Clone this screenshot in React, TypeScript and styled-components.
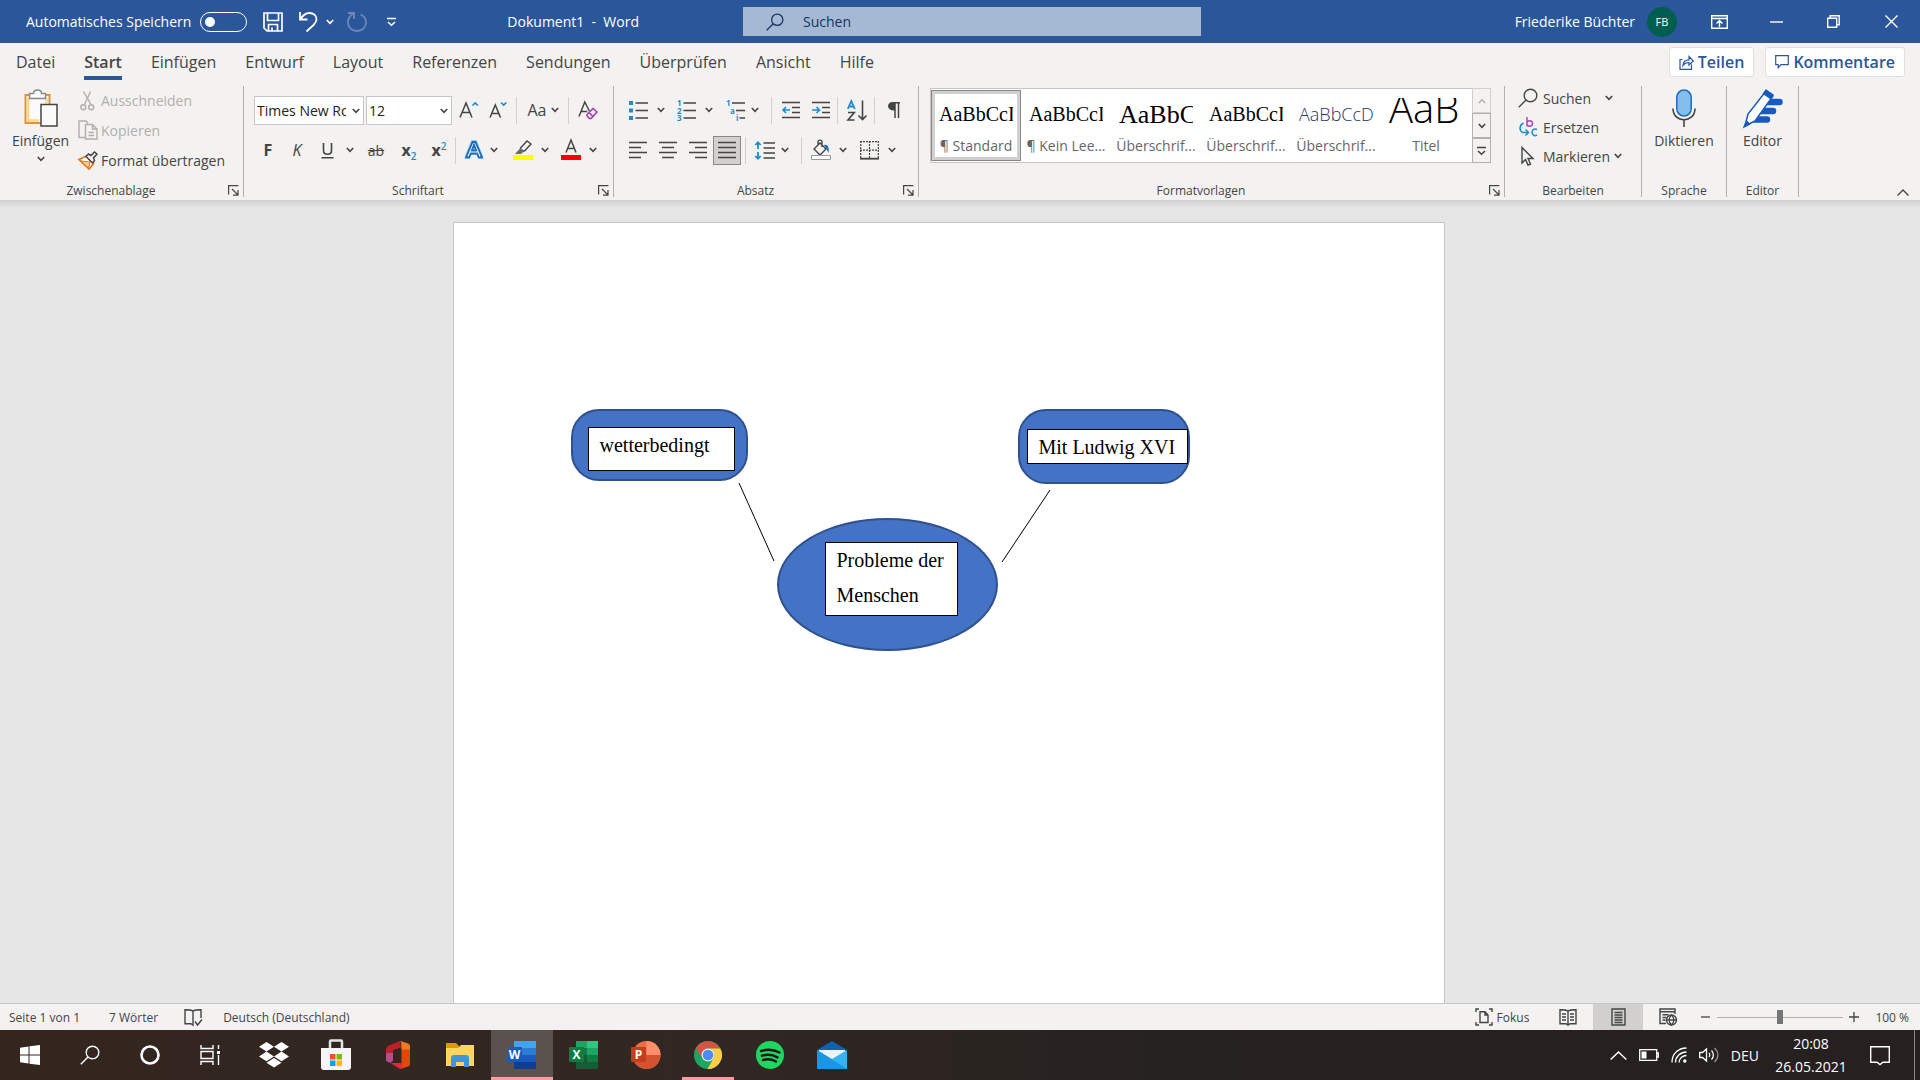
import React from 'react';
import styled, { createGlobalStyle, css } from 'styled-components';

const ink = '#444444';
const blue = '#2b579a';
const accent = '#1e8bcd';
const sans = '"Segoe UI", "Open Sans", "Noto Sans", sans-serif';
const serif = '"Times New Roman", "Liberation Serif", serif';

const GlobalStyle = createGlobalStyle`
  *, *::before, *::after { box-sizing: border-box; }
  html, body { margin: 0; height: 100%; }
  body { font-family: ${sans}; font-size: 14px; color: ${ink}; background: #e6e6e6; }
  button, input, select { font: inherit; color: inherit; }
  button { background: none; border: 0; padding: 0; cursor: default; white-space: nowrap; }
  svg { display: block; flex: none; overflow: visible; }
`;

const Shell = styled.div`
  display: flex;
  flex-direction: column;
  height: 100vh;
  overflow: hidden;
`;

/* ---------- Icons ---------- */

type IconProps = { w: number; h: number; sw?: number; children: React.ReactNode };
const Icon = ({ w, h, sw = 1.4, children }: IconProps) => (
  <svg width={w} height={h} viewBox={`0 0 ${w} ${h}`} fill="none" stroke="currentColor" strokeWidth={sw} aria-hidden="true">
    {children}
  </svg>
);

const Chevron = () => (
  <Icon w={8} h={6} sw={1.6}><path d="M.8 1 4 4.3 7.2 1" /></Icon>
);

const Magnifier = ({ size = 20 }: { size?: number }) => (
  <svg width={size} height={size} viewBox="0 0 20 20" fill="none" stroke="currentColor" strokeWidth="1.4" aria-hidden="true">
    <circle cx="12.5" cy="7.5" r="6.3" /><path d="M8 12 .8 19.2" />
  </svg>
);

const SaveIcon = () => (
  <Icon w={20} h={20} sw={1.7}>
    <path d="M1 1h18v18H4l-3-3zM4.500 1v7.500h11V1M5.500 19v-6.500h9V19M9 19v-3.500" />
  </Icon>
);
const UndoIcon = () => (
  <Icon w={19} h={21} sw={1.8}><path d="M1 1v7.500h7.500M1.500 8C4 4 7 2 10.500 2c4.500 0 7 3 7 6 0 2.500-1 4-3 6L7.500 20.500" /></Icon>
);
const RedoIcon = () => (
  <Icon w={20} h={20} sw={1.8}><path d="M1 1h6v6M6.500 1.500C3 3.500 1 6.500 1 10.500c0 5 4 8.500 9 8.500s9-3.500 9-8.500c0-3.500-2-6.500-5.500-8" /></Icon>
);
const CustomizeIcon = () => (
  <Icon w={9} h={10} sw={1.5}><path d="M0 1.500h9M1 5l3.500 3.300L8 5" /></Icon>
);
const RibbonModeIcon = () => (
  <Icon w={17} h={14} sw={1.4}><path d="M.7.7h15.600v12.600H.7zM.7 3.500h15.600M8.500 12V6M5.500 8.500l3-3 3 3" /></Icon>
);
const RestoreIcon = () => (
  <Icon w={13} h={13} sw={1.4}><path d="M.7 3.200h9v9h-9zM3.200 3V.7h9v9H10" /></Icon>
);
const ShareIcon = () => (
  <Icon w={15} h={15} sw={1.2}><path d="M3.500 4.500H1v9.800h11.500V9.500M4 10.500c.2-3.500 2.500-5.700 6-5.700V1.500L14.300 6 10 10V7.500c-3 0-4.700 1-6 3z" /></Icon>
);
const CommentIcon = () => (
  <Icon w={14} h={14} sw={1.2}><path d="M.7.7h12.600v9H6L3.200 12.800V9.700H.7z" /></Icon>
);

const PasteIcon = () => (
  <Icon w={34} h={38}>
    <path d="M1.500 6h24v28h-24z" fill="#fafafa" stroke="#e8912f" strokeWidth="2" />
    <path d="M4 8.500v23h11" stroke="#fbd98b" strokeWidth="2.500" /><path d="M22.500 8.500v6" stroke="#fbd98b" strokeWidth="2.500" />
    <path d="M5.500 9.500V4.500h4c0-2 1.500-3.500 4-3.500s4 1.500 4 3.500h4v5z" fill="#fafafa" stroke="#8a8a8a" strokeWidth="1.500" />
    <path d="M17 15.500h16v21.500H17z" fill="#fafafa" stroke={ink} strokeWidth="1.500" />
  </Icon>
);
const CutIcon = () => (
  <Icon w={16} h={20} sw={1.400}><path d="M3.500.5 11 13.500M10.500.5 4.500 13.500" /><circle cx="3.300" cy="16.300" r="2.500" /><circle cx="11.200" cy="16.300" r="2.500" /></Icon>
);
const CopyIcon = () => (
  <Icon w={20} h={20} sw={1.400}><path d="M7 17.500H1V1h7l2 2.500" /><path d="M7.500 4.500h7L19 9v10H7.500zM14.500 4.500V9H19M10.500 12.500h5.500M10.500 15.500h5.500" /></Icon>
);
const BrushIcon = () => (
  <Icon w={20} h={19}>
    <path d="M1 8.500 8.500 5l7 7.500L11 18z" fill="#fff" stroke="#e8761c" strokeWidth="1.800" /><path d="m3 10 9 1-1.500 6z" fill="#fbd28b" stroke="#e8761c" strokeWidth="1" />
    <path d="M8 5.500 10.500 3l2.500 1.500L16.500 1l2.500 2-3.500 4 1 2.500-2 2.500z" fill="#f3f2f1" stroke={ink} strokeWidth="1.500" />
  </Icon>
);
const LauncherIcon = () => (
  <Icon w={11} h={11} sw={1.200}><path d="M.6 9.500V.6h9.800M4 4l6 6M10 5v5.200H5" /></Icon>
);
const GrowIcon = ({ down = false }: { down?: boolean }) => (
  <Icon w={20} h={18} sw={1.500}>
    {down ? <path d="M1 16.500 6.300 4l5.200 12.500M2.800 12.500h7" /> : <path d="M1 16.500 7 2l6 14.500M3.200 11.500h7.600" />}
    <path d={down ? 'M12 1.500 14.700 4l2.700-2.500' : 'M13.500 4.500 16.200 2l2.700 2.500'} stroke={accent} strokeWidth="1.700" />
  </Icon>
);
const ClearFormatIcon = () => (
  <Icon w={20} h={20} sw={1.500}>
    <path d="M1 16.500 6.800 2l4.500 9M3.200 11.500h6" />
    <path d="m9 14.500 6-6 4 3.500-6 6.500h-1.500L9 16zM11 12.500l4 4" stroke="#9b3fa8" fill="#f3e6f5" />
  </Icon>
);
const UnderlineIcon = () => (
  <Icon w={13} h={17} sw={1.600}><path d="M2.500 1v7.500c0 5 8 5 8 0V1M.5 15.700h12" /></Icon>
);
const TextEffectIcon = () => (
  <Icon w={20} h={20}>
    <path d="M3 17.500 9 2.500h2l6 15M5.500 12.500h9" stroke="#a5cdee" strokeWidth="5" />
    <path d="M2 17.500 8.500 2h3L18 17.500h-3.200l-1.600-4H6.800l-1.600 4zM7.900 10.500h4.200L10 5z" fill="#fff" fillRule="evenodd" stroke="#1a6dbd" strokeWidth="1.900" />
  </Icon>
);
const HighlightIcon = () => (
  <Icon w={20} h={20}>
    <path d="M0 15h20v5H0z" fill="#ffff00" stroke="none" />
    <path d="m7.500 8 6.500-7 4 3-6.500 7H8z" strokeWidth="1.400" /><path d="m7.500 8-5.500 6h6l3.500-3z" fill="#6a6a6a" stroke="none" />
  </Icon>
);
const FontColorIcon = () => (
  <Icon w={20} h={20} sw={1.500}><path d="M0 15h20v5H0z" fill="#ff0000" stroke="none" /><path d="M5 12.500 10 0l5 12.500M6.800 8.500h6.400" /></Icon>
);
const BulletsIcon = () => (
  <Icon w={19} h={19} sw={1.600}>
    <path d="M6.500 2H19M6.500 9.500H19M6.500 17H19" />
    <path d="M0 0h4v4H0zM0 7.500h4v4H0zM0 15h4v4H0z" fill={accent} stroke="none" />
  </Icon>
);
const NumberGlyph = styled.text`
  font: 700 8px ${sans};
  fill: ${accent};
  stroke: none;
`;
const NumbersIcon = () => (
  <Icon w={19} h={19} sw={1.600}>
    <path d="M6.500 2H19M6.500 9.500H19M6.500 17H19" />
    <NumberGlyph x="0" y="5">1</NumberGlyph><NumberGlyph x="0" y="12.500">2</NumberGlyph><NumberGlyph x="0" y="20">3</NumberGlyph>
  </Icon>
);
const MultilevelIcon = () => (
  <Icon w={19} h={19} sw={1.600}>
    <path d="M6 2h13M10 9.500h9M13.500 17H19" />
    <NumberGlyph x="0" y="5">1</NumberGlyph><NumberGlyph x="4" y="12.500">a</NumberGlyph><NumberGlyph x="10" y="20">i</NumberGlyph>
  </Icon>
);
const IndentIcon = ({ out = false }: { out?: boolean }) => (
  <Icon w={18} h={18} sw={1.600}>
    <path d="M0 1.500h18M10 6.500h8M10 11.500h8M0 16.500h18" />
    <path d={out ? 'M8 9H1M4 6 1 9l3 3' : 'M0 9h7M4.500 6l3 3-3 3'} stroke={accent} />
  </Icon>
);
const SortIcon = () => (
  <Icon w={20} h={21} sw={1.600}>
    <path d="M.8 9 4.300 1l3.500 8M2 6.500h4.800" stroke={accent} strokeWidth="1.800" />
    <path d="M1 12.500h6.300L1 20h6.500M15.500.5v19M11.500 15.500l4 4 4-4" />
  </Icon>
);
const PilcrowIcon = () => (
  <Icon w={12} h={16} sw={1.500}><path d="M12 .8H5.500M7 1v15M10.500 1v15" /><path d="M7 0v8.500C-2 9-2 0 5 0z" fill={ink} stroke="none" /></Icon>
);
const AlignIcon = ({ kind }: { kind: 'l' | 'c' | 'r' | 'j' }) => {
  const short = { l: 'M0 6.500h12M0 16.500h12', c: 'M3 6.500h12M3 16.500h12', r: 'M6 6.500h12M6 16.500h12', j: 'M0 6.500h18M0 16.500h18' }[kind];
  return <Icon w={18} h={18} sw={1.600}><path d={`M0 1.500h18M0 11.500h18${short}`} /></Icon>;
};
const LineSpacingIcon = () => (
  <Icon w={20} h={19} sw={1.600}>
    <path d="M8.500 2H20M8.500 7H20M8.500 12H20M8.500 17H20" />
    <path d="M3 1v7M.3 4 3 1.200 5.700 4M3 11v7M.3 15 3 17.800 5.700 15" stroke={accent} strokeWidth="1.800" />
  </Icon>
);
const FillIcon = () => (
  <Icon w={20} h={20}>
    <path d="m3 9 6-6 6 6-6 6zM7 5.500V2c0-2.500 4-2.500 4 0v5" /><path d="M13 5c4-1.500 5.500 3 4.500 8l-2-4z" fill="#1a6dbd" stroke="none" />
    <path d="M.5 15.500h19v4H.5z" fill="#fff" stroke="#9a9a9a" strokeWidth="1" />
  </Icon>
);
const BordersIcon = () => (
  <Icon w={19} h={19}>
    <path d="M.7 0v18M9.500 0v18M18.300 0v18M0 .7h19M0 9.200h19" strokeDasharray="2 1" strokeWidth="1.200" /><path d="M0 17.700h19" strokeWidth="1.800" />
  </Icon>
);
const ReplaceIcon = () => (
  <Icon w={18} h={20}>
    <path d="M4.500 6C0 8 0 14 4 15.500h5M6.500 12.500l3 3-3 3" stroke={accent} strokeWidth="1.500" />
    <path d="M8 0v9.500M8 6c0-3 5.500-3 5.500.500S8 10 8 7" stroke="#b146c2" strokeWidth="1.500" />
    <path d="M18 12.500c-2.500-1.500-5 0-5 2.800s2.500 4.200 5 2.700" stroke={accent} strokeWidth="1.500" />
  </Icon>
);
const CursorIcon = () => (
  <Icon w={14} h={20} sw={1.400}><path d="M1 1.500v15.500l3.500-3.500 2.500 5.500 2.500-1-2.500-5.500h5z" /></Icon>
);
const MicIcon = () => (
  <Icon w={24} h={38}>
    <rect x="4.800" y="1" width="14.400" height="26" rx="7.200" fill="#83beec" stroke="#1a6dbd" strokeWidth="1.500" />
    <path d="M1 19.500c0 15 22 15 22 0M12 31v7" strokeWidth="1.600" />
  </Icon>
);
const EditorIcon = () => (
  <Icon w={38} h={38}>
    <path d="M17 13h18.500M14 22h15M10 30.500h13" stroke="#185abd" strokeWidth="6.500" strokeLinecap="round" />
    <path d="M1 37 4 25 22 2l7 5-18 25z" fill="#fff" stroke="#185abd" strokeWidth="1.500" />
    <path d="m22 1 7 5-2.500 3.500-7-5zM0 38l2.500-6 3 3z" fill="#185abd" stroke="#185abd" />
  </Icon>
);

/* ---------- Title bar ---------- */

const TitleBar = styled.header`
  display: grid;
  grid-template-columns: 743fr 458fr 719fr;
  align-items: center;
  flex: none;
  height: 43px;
  background: ${blue};
  color: #fff;
`;
const QuickAccess = styled.div`
  display: flex;
  align-items: center;
  padding-left: 26px;
`;
const ToggleLabel = styled.label`
  display: flex;
  align-items: center;
  gap: 9px;
  white-space: nowrap;
`;
const Toggle = styled.input`
  appearance: none;
  display: flex;
  align-items: center;
  width: 47px;
  height: 20px;
  margin: 0 8px 0 0;
  padding: 0 4px;
  border: 1px solid #fff;
  border-radius: 10px;
  &::before {
    content: '';
    width: 10px;
    height: 10px;
    border-radius: 50%;
    background: #fff;
  }
`;
const BarButton = styled.button<{ $w: number; $dim?: boolean }>`
  display: flex;
  align-items: center;
  justify-content: center;
  width: ${p => p.$w}px;
  height: 32px;
  opacity: ${p => (p.$dim ? 0.3 : 1)};
`;
const DocumentTitle = styled.span`
  margin: 0 auto;
  white-space: pre;
`;
const SearchBox = styled.label`
  display: flex;
  align-items: center;
  gap: 19px;
  height: 29px;
  padding: 0 23px;
  background: #a6b9d2;
  color: #133368;
  input {
    flex: 1;
    min-width: 0;
    border: 0;
    padding: 0;
    outline: 0;
    background: none;
    &::placeholder { color: #133368; opacity: 1; }
  }
`;
const Account = styled.div`
  display: flex;
  align-items: center;
  justify-content: flex-end;
`;
const Avatar = styled.span`
  display: grid;
  place-items: center;
  width: 30px;
  height: 30px;
  margin: 0 14px 0 12px;
  border-radius: 50%;
  background: #005e50;
  font-size: 11px;
`;

/* ---------- Ribbon tabs ---------- */

const TabRow = styled.nav`
  display: flex;
  align-items: center;
  flex: none;
  gap: 1px;
  height: 38px;
  padding: 0 15px 0 2px;
  background: #f3f2f1;
`;
const Tab = styled.button<{ $active?: boolean }>`
  position: relative;
  height: 36px;
  padding: 0 14px;
  font-size: 16px;
  ${p => p.$active && css`
    font-weight: 600;
    &::after {
      content: '';
      position: absolute;
      left: 14px;
      right: 14px;
      bottom: 0;
      height: 4px;
      background: ${blue};
    }
  `}
`;
const TabActions = styled.div`
  display: flex;
  gap: 11px;
  margin-left: auto;
`;
const ActionButton = styled.button`
  display: flex;
  align-items: center;
  gap: 4px;
  height: 30px;
  padding: 0 9px;
  border: 1px solid #e1dfdd;
  border-radius: 3px;
  background: #fff;
  color: ${blue};
  font-size: 16px;
  font-weight: 600;
`;

/* ---------- Ribbon ---------- */

const Ribbon = styled.section`
  display: flex;
  flex: none;
  height: 119px;
  padding: 5px 0 3px;
  background: #f3f2f1;
`;
const Group = styled.div<{ $w: number }>`
  display: flex;
  flex-direction: column;
  flex: 0 0 ${p => p.$w}px;
  border-right: 1px solid #b3b0ad;
`;
const GroupBody = styled.div<{ $pad?: number }>`
  display: flex;
  flex: 1;
  min-height: 0;
  padding-left: ${p => p.$pad ?? 0}px;
`;
const GroupFooter = styled.div`
  display: flex;
  align-items: center;
  height: 14px;
  font-size: 12px;
  span { flex: 1; text-align: center; }
  button { margin: 0 4px 0 6px; }
`;
const Stack = styled.div`
  display: flex;
  flex-direction: column;
`;
const BigButton = styled.button<{ $w: number }>`
  display: flex;
  flex-direction: column;
  align-items: center;
  align-self: flex-start;
  width: ${p => p.$w}px;
  padding-top: 3px;
  line-height: 20px;
  svg:first-child { margin-bottom: 4px; }
  svg:last-child:not(:first-child) { margin-top: 5px; }
`;
const TextButton = styled.button<{ $off?: boolean; $h: number; $icon: number; $gap?: number }>`
  display: flex;
  align-items: center;
  height: ${p => p.$h}px;
  color: ${p => (p.$off ? '#b1afad' : ink)};
  > span:first-child {
    display: flex;
    justify-content: center;
    width: ${p => p.$icon}px;
    margin-right: 4px;
  }
  > svg { margin-left: ${p => p.$gap ?? 0}px; }
`;
const ToolRow = styled.div<{ $mt?: number }>`
  display: flex;
  align-items: center;
  height: 30px;
  margin-top: ${p => p.$mt ?? 9}px;
`;
const Tool = styled.button<{ $w?: number; $on?: boolean; $gap?: number; $small?: boolean }>`
  display: flex;
  align-items: center;
  justify-content: center;
  gap: 4px;
  width: ${p => p.$w ?? 30}px;
  height: 29px;
  margin-right: ${p => p.$gap ?? 0}px;
  flex: none;
  font-size: ${p => (p.$small ? 14 : 16)}px;
  ${p => p.$on && css`
    background: #d2d0ce;
    border: 1px solid #8a8886;
  `}
  sub, sup { color: ${accent}; font-size: 10px; font-weight: 600; line-height: 0; }
`;
const Divider = styled.span<{ $l?: number; $r?: number }>`
  width: 1px;
  height: 27px;
  margin: 0 ${p => p.$r ?? 4}px 0 ${p => p.$l ?? 4}px;
  background: #d2d0ce;
`;
const Combo = styled.label<{ $w: number }>`
  position: relative;
  width: ${p => p.$w}px;
  height: 29px;
  margin-right: 2px;
  select {
    appearance: none;
    width: 100%;
    height: 100%;
    padding: 0 17px 0 2px;
    border: 1px solid #c8c6c4;
    border-radius: 0;
    background: #fff;
    color: #222;
    text-overflow: clip;
  }
  svg {
    position: absolute;
    right: 4px;
    top: 12px;
    pointer-events: none;
  }
`;

const Gallery = styled.div`
  display: flex;
  width: 561px;
  height: 75px;
  margin-top: 2px;
  border: 1px solid #c8c6c4;
  background: #fff;
`;
const StyleCard = styled.button<{ $on?: boolean }>`
  display: flex;
  flex-direction: column;
  align-items: center;
  width: 90px;
  height: 71px;
  margin-top: 1px;
  padding: 3px;
  border: 1px solid ${p => (p.$on ? '#8a8886' : 'transparent')};
  box-shadow: ${p => (p.$on ? 'inset 0 0 0 3px #d2d0ce' : 'none')};
  color: #666;
`;
const Sample = styled.span<{ $size: number; $weight?: number; $color?: string }>`
  width: 74px;
  height: 42px;
  overflow: hidden;
  text-align: left;
  color: ${p => p.$color ?? '#000'};
  font: ${p => p.$weight ?? 400} ${p => p.$size}px/41px ${p => (p.$weight ? sans : serif)};
`;
const TitleSample = styled(Sample)`
  height: 38px;
  margin-top: 4px;
  line-height: 20px;
`;
const StyleName = styled.span`
  line-height: 20px;
`;
const GalleryScroll = styled.div`
  display: grid;
  grid-template-rows: repeat(3, 1fr);
  width: 19px;
  margin: -1px -1px -1px auto;
  button {
    display: grid;
    place-items: center;
    border: 1px solid #b3b0ad;
    background: #f3f2f1;
    &:disabled { color: #b3b0ad; border-color: #d2d0ce; }
  }
`;
const CollapseButton = styled.button`
  align-self: flex-end;
  margin: 0 11px 1px auto;
`;

/* ---------- Document ---------- */

const Workspace = styled.main`
  display: flex;
  justify-content: center;
  flex: 1;
  min-height: 0;
  padding: 22px 23px 0 0;
  background: linear-gradient(#cfcfcf, #e6e6e6 8px);
`;
const Page = styled.article`
  position: relative;
  flex: 0 0 992px;
  border: 1px solid #c6c6c6;
  border-bottom: 0;
  background: #fff;
`;
type Box = { $x: number; $y: number; $w: number; $h: number };
const placed = css<Box>`
  position: absolute;
  left: ${p => p.$x}px;
  top: ${p => p.$y}px;
  width: ${p => p.$w}px;
  height: ${p => p.$h}px;
`;
const Shape = styled.div<Box & { $round: string }>`
  ${placed}
  border: 2px solid #2f528f;
  border-radius: ${p => p.$round};
  background: #4472c4;
`;
const TextBox = styled.p<Box & { $lead: number }>`
  ${placed}
  margin: 0;
  padding: 0 11px;
  border: 1px solid #000;
  background: #fff;
  color: #000;
  font: 20px/${p => p.$lead}px ${serif};
  white-space: nowrap;
`;
const Connectors = styled.svg`
  position: absolute;
  left: 0;
  top: 0;
  stroke: #000;
  stroke-width: 1;
`;

/* ---------- Status bar ---------- */

const StatusBar = styled.footer`
  display: flex;
  align-items: center;
  flex: none;
  height: 27px;
  padding: 0 11px 0 9px;
  border-top: 1px solid #c6c6c6;
  background: #f3f2f1;
  font-size: 12px;
  > * { white-space: nowrap; }
`;
const StatusButton = styled.button<{ $gap?: number }>`
  display: flex;
  align-items: center;
  gap: 4px;
  margin-right: ${p => p.$gap ?? 0}px;
`;
const ViewButton = styled.button<{ $on?: boolean }>`
  display: grid;
  place-items: center;
  width: 50px;
  height: 26px;
  background: ${p => (p.$on ? '#d2d0ce' : 'none')};
`;
const ZoomSlider = styled.input`
  appearance: none;
  width: 126px;
  height: 16px;
  margin: 0 6px;
  background: linear-gradient(#b3b0ad, #b3b0ad) center / 100% 1px no-repeat;
  &::-webkit-slider-thumb {
    appearance: none;
    width: 6px;
    height: 14px;
    background: #757575;
  }
`;
const Spacer = styled.span`
  flex: 1;
`;

/* ---------- Taskbar ---------- */

const Taskbar = styled.nav`
  display: flex;
  flex: none;
  height: 50px;
  padding-right: 5px;
  background: linear-gradient(90deg, #33261f 0%, #332723 35%, #2d2522 45%, #262220 60%, #262020 100%);
  color: #fff;
`;
const TaskButton = styled.button<{ $w?: number; $state?: 'open' | 'active' }>`
  display: flex;
  align-items: center;
  justify-content: center;
  width: ${p => p.$w ?? 62}px;
  height: 50px;
  background: ${p => (p.$state === 'active' ? '#5b514e' : 'none')};
  ${p => p.$state && css`
    border-bottom: 3px solid #ff9a9f;
    padding-top: 3px;
  `}
  ${p => p.$state === 'open' && css`
    width: 52px;
    margin: 0 5px;
  `}
`;
const PinnedStart = styled.div`
  display: flex;
  margin-right: 3px;
`;
const Tray = styled.div`
  display: flex;
  align-items: center;
  gap: 12px;
  margin-left: auto;
`;
const Clock = styled.time`
  width: 80px;
  text-align: center;
  line-height: 23px;
`;
const NoticeButton = styled.button`
  padding: 0 24px 0 7px;
  height: 50px;
  border-right: 1px solid #8a8583;
`;
const AppLetter = styled.text`
  font: 700 12px ${sans};
  fill: #fff;
  stroke: none;
  text-anchor: middle;
`;

const WordTile = () => (
  <Icon w={30} h={28}>
    <g stroke="none">
      {['#41a5ee', '#2b7cd3', '#185abd', '#103f91'].map((c, i) => <rect key={c} x="7" y={i * 7} width="22" height="7" fill={c} />)}
      <rect y="6" width="15" height="15" rx="1" fill="#185abd" />
    </g>
    <AppLetter x="7.500" y="18">W</AppLetter>
  </Icon>
);
const ExcelTile = () => (
  <Icon w={30} h={28}>
    <g stroke="none">
      <path d="M7 0h11v7H7z" fill="#21a366" /><path d="M18 0h11v7H18z" fill="#33c481" />
      <path d="M7 7h11v7H7z" fill="#107c41" /><path d="M18 7h11v7H18z" fill="#21a366" />
      <path d="M7 14h11v7H7z" fill="#185c37" /><path d="M18 14h11v7H18z" fill="#107c41" />
      <path d="M7 21h22v7H7z" fill="#185c37" /><rect y="6" width="15" height="15" rx="1" fill="#107c41" />
    </g>
    <AppLetter x="7.500" y="18">X</AppLetter>
  </Icon>
);
const PowerPointTile = () => (
  <Icon w={30} h={28}>
    <g stroke="none">
      <circle cx="15.500" cy="14" r="14" fill="#ed6c47" /><path d="M15.500 0a14 14 0 0 1 14 14h-14z" fill="#ff8f6b" />
      <path d="M1.500 14h28a14 14 0 0 1-28 0z" fill="#d35230" /><rect y="6" width="15" height="15" rx="1" fill="#c43e1c" />
    </g>
    <AppLetter x="7.500" y="18">P</AppLetter>
  </Icon>
);
const WindowsLogo = () => (
  <Icon w={20} h={20}><path d="M0 2.700 8.500 1.500v8H0zM9.500 1.300 20 0v9.500H9.500zM0 10.500h8.500v8L0 17.300zM9.500 10.500H20V20L9.500 18.700z" fill="#fff" stroke="none" /></Icon>
);
const TaskViewIcon = () => (
  <Icon w={20} h={20} sw={1.400}><path d="M1 0v3.500h12V0M1 6.500h12v7H1zM1 20v-3.500h12V20M18.500 0v4M18.500 10v10" /><path d="M17 6h3v3h-3z" fill="#fff" stroke="none" /></Icon>
);
const DropboxIcon = () => (
  <Icon w={30} h={26}><path d="m7.500 0 7.500 4.800-7.500 4.800L0 4.800zM22.500 0 30 4.800l-7.500 4.800L15 4.800zM0 14.400l7.500-4.800 7.500 4.800-7.500 4.800zM22.500 9.600l7.500 4.800-7.500 4.800-7.500-4.800zM7.500 20.800 15 16l7.500 4.800L15 25.600z" fill="#fff" stroke="none" /></Icon>
);
const StoreIcon = () => (
  <Icon w={30} h={30}>
    <path d="M9 9V1.500q0-1 1-1h10q1 0 1 1V9" stroke="#e4e4e4" strokeWidth="2.500" />
    <g stroke="none"><path d="M0 8h30v19q0 3-3 3H3q-3 0-3-3z" fill="#f5f5f5" />
      <path d="M9 14h5.500v5.500H9z" fill="#f25022" /><path d="M15.500 14H21v5.500h-5.500z" fill="#7fba00" />
      <path d="M9 20.500h5.500V26H9z" fill="#00a4ef" /><path d="M15.500 20.500H21V26h-5.500z" fill="#ffb900" /></g>
  </Icon>
);
const OfficeIcon = () => (
  <Icon w={24} h={28}>
    <g stroke="none"><path d="M14 0 3 4.500Q0 6 0 9v10l3.500 2.500L7 19.500V9l8-2.500z" fill="#c11f27" /><path d="M0 12v8l4.500 2L7 19.500V12z" fill="#b84a8e" />
      <path d="M4.500 22 14 28l3-1-2-5z" fill="#e8233b" /><path d="m14 0 8 2.500q2 1 2 3V23q0 2-2 2.500L14 28q1.500-1 1.500-3V3q0-2-1.500-3z" fill="#e2480a" /><path d="m14 0 8 2.500q2 1 2 3v3h-8.500V3q0-2-1.500-3z" fill="#ee7a1d" /></g>
  </Icon>
);
const ExplorerIcon = () => (
  <Icon w={28} h={24}>
    <g stroke="none"><path d="M0 0h10l3 3v4H0z" fill="#dd9a05" /><path d="M0 5h12l3-3h13v21H0z" fill="#ffd55e" /><path d="M5 24V15q0-3 3-3h12q3 0 3 3v9h-5v-5h-8v5z" fill="#3d96db" /></g>
  </Icon>
);
const ChromeIcon = () => (
  <Icon w={28} h={28}>
    <g stroke="none"><circle cx="14" cy="14" r="14" fill="#1da462" />
      <path d="M1.900 7A14 14 0 0 1 26.100 7.400H14a6.600 6.600 0 0 0-5.900 9.500z" fill="#dd5144" />
      <path d="M26.300 7.400A14 14 0 0 1 13.400 28l6-10.500a6.600 6.600 0 0 0-5.400-10.100z" fill="#ffcd46" />
      <circle cx="14" cy="14" r="6.500" fill="#f1f1f1" /><circle cx="14" cy="14" r="5.300" fill="#4c8bf5" /></g>
  </Icon>
);
const SpotifyIcon = () => (
  <Icon w={28} h={28}><circle cx="14" cy="14" r="14" fill="#1ed760" stroke="none" /><path d="M5 10c6-2 13-1.500 18.500 1.500M6 14.700c5-1.500 11-1 15.500 1.700M7 19c4.500-1.300 9-.8 13 1.500" stroke="#191414" strokeWidth="2.400" strokeLinecap="round" /></Icon>
);
const MailIcon = () => (
  <Icon w={30} h={28}>
    <g stroke="none"><path d="M0 9 15 0l15 9v4H0z" fill="#0a63b0" /><path d="M2 9h26v10H2z" fill="#f2f2f2" />
      <path d="m0 9 15 9 15-9v19H0z" fill="#32b4f0" /><path d="m0 9 30 19H0z" fill="#1a97e0" /></g>
  </Icon>
);

const styleCards = [
  { sample: 'AaBbCcI', name: '¶ Standard', size: 20 },
  { sample: 'AaBbCcI', name: '¶ Kein Lee...', size: 20 },
  { sample: 'AaBbC', name: 'Überschrif...', size: 26 },
  { sample: 'AaBbCcI', name: 'Überschrif...', size: 20 },
  { sample: 'AaBbCcD', name: 'Überschrif...', size: 18, weight: 300, color: '#1f3763' },
];

const tabs = ['Datei', 'Start', 'Einfügen', 'Entwurf', 'Layout', 'Referenzen', 'Sendungen', 'Überprüfen', 'Ansicht', 'Hilfe'];

const Footer = ({ children, launcher = false }: { children: string; launcher?: boolean }) => (
  <GroupFooter>
    <span>{children}</span>
    {launcher && <button aria-label={`${children} öffnen`}><LauncherIcon /></button>}
  </GroupFooter>
);

const More = ({ w = 16, gap = 0, label }: { w?: number; gap?: number; label: string }) => (
  <Tool $w={w} $gap={gap} aria-label={label}><Chevron /></Tool>
);

export default function App() {
  return (
    <Shell>
      <GlobalStyle />
      <TitleBar>
        <QuickAccess>
          <ToggleLabel>Automatisches Speichern<Toggle type="checkbox" /></ToggleLabel>
          <BarButton $w={36} aria-label="Speichern"><SaveIcon /></BarButton>
          <BarButton $w={34} aria-label="Rückgängig"><UndoIcon /></BarButton>
          <BarButton $w={10} aria-label="Rückgängig-Liste"><Chevron /></BarButton>
          <BarButton $w={44} $dim aria-label="Wiederholen"><RedoIcon /></BarButton>
          <BarButton $w={24} aria-label="Leiste anpassen"><CustomizeIcon /></BarButton>
          <DocumentTitle>Dokument1  -  Word</DocumentTitle>
        </QuickAccess>
        <SearchBox>
          <Magnifier size={18} />
          <input type="text" placeholder="Suchen" aria-label="Suchen" />
        </SearchBox>
        <Account>
          <span>Friederike Büchter</span>
          <Avatar>FB</Avatar>
          <BarButton $w={57} aria-label="Menüband-Anzeige"><RibbonModeIcon /></BarButton>
          <BarButton $w={57} aria-label="Minimieren"><Icon w={13} h={2}><path d="M0 1h13" /></Icon></BarButton>
          <BarButton $w={57} aria-label="Verkleinern"><RestoreIcon /></BarButton>
          <BarButton $w={58} aria-label="Schließen"><Icon w={13} h={13}><path d="m.5.5 12 12m0-12-12 12" /></Icon></BarButton>
        </Account>
      </TitleBar>

      <TabRow>
        {tabs.map(t => <Tab key={t} $active={t === 'Start'}>{t}</Tab>)}
        <TabActions>
          <ActionButton><ShareIcon />Teilen</ActionButton>
          <ActionButton><CommentIcon />Kommentare</ActionButton>
        </TabActions>
      </TabRow>

      <Ribbon>
        <Group $w={244}>
          <GroupBody $pad={3}>
            <BigButton $w={75}><PasteIcon />Einfügen<Chevron /></BigButton>
            <Stack>
              <TextButton $h={29} $icon={19} $off disabled><span><CutIcon /></span>Ausschneiden</TextButton>
              <TextButton $h={30} $icon={19} $off disabled><span><CopyIcon /></span>Kopieren</TextButton>
              <TextButton $h={30} $icon={19}><span><BrushIcon /></span>Format übertragen</TextButton>
            </Stack>
          </GroupBody>
          <Footer launcher>Zwischenablage</Footer>
        </Group>

        <Group $w={370}>
          <GroupBody $pad={10}>
            <Stack>
              <ToolRow>
                <Combo $w={110}><select aria-label="Schriftart"><option>Times New Roman</option></select><Chevron /></Combo>
                <Combo $w={86}><select aria-label="Schriftgrad"><option>12</option></select><Chevron /></Combo>
                <Tool aria-label="Schriftgrad vergrößern"><GrowIcon /></Tool>
                <Tool aria-label="Schriftgrad verkleinern"><GrowIcon down /></Tool>
                <Divider $l={2} $r={5} />
                <Tool $w={42}>Aa<Chevron /></Tool>
                <Divider />
                <Tool aria-label="Formatierung löschen"><ClearFormatIcon /></Tool>
              </ToolRow>
              <ToolRow $mt={10}>
                <Tool $w={28}><b>F</b></Tool>
                <Tool><i>K</i></Tool>
                <Tool aria-label="Unterstreichen"><UnderlineIcon /></Tool>
                <More label="Unterstreichungsart" />
                <Tool $w={36} $small><s>ab</s></Tool>
                <Tool><span><b>x</b><sub>2</sub></span></Tool>
                <Tool><span><b>x</b><sup>2</sup></span></Tool>
                <Divider $l={1} $r={4} />
                <Tool $w={28} aria-label="Texteffekte"><TextEffectIcon /></Tool>
                <More w={12} gap={8} label="Weitere Texteffekte" />
                <Tool aria-label="Hervorheben"><HighlightIcon /></Tool>
                <More w={14} gap={4} label="Hervorhebungsfarbe" />
                <Tool aria-label="Schriftfarbe"><FontColorIcon /></Tool>
                <More w={14} label="Weitere Schriftfarben" />
              </ToolRow>
            </Stack>
          </GroupBody>
          <Footer launcher>Schriftart</Footer>
        </Group>

        <Group $w={305}>
          <GroupBody $pad={9}>
            <Stack>
              <ToolRow>
                <Tool aria-label="Aufzählung"><BulletsIcon /></Tool>
                <More gap={2} label="Aufzählungszeichen" />
                <Tool aria-label="Nummerierung"><NumbersIcon /></Tool>
                <More gap={4} label="Nummerierungsformat" />
                <Tool $w={28} aria-label="Liste mit mehreren Ebenen"><MultilevelIcon /></Tool>
                <More w={12} label="Listenformat" />
                <Divider $l={10} $r={4} />
                <Tool aria-label="Einzug verkleinern"><IndentIcon out /></Tool>
                <Tool aria-label="Einzug vergrößern"><IndentIcon /></Tool>
                <Divider $l={1} $r={4} />
                <Tool aria-label="Sortieren"><SortIcon /></Tool>
                <Divider $l={2} $r={4} />
                <Tool aria-label="Absatzmarken"><PilcrowIcon /></Tool>
              </ToolRow>
              <ToolRow $mt={10}>
                <Tool aria-label="Linksbündig"><AlignIcon kind="l" /></Tool>
                <Tool aria-label="Zentriert"><AlignIcon kind="c" /></Tool>
                <Tool aria-label="Rechtsbündig"><AlignIcon kind="r" /></Tool>
                <Tool $w={28} $on aria-label="Blocksatz"><AlignIcon kind="j" /></Tool>
                <Divider $r={5} />
                <Tool $w={28} aria-label="Zeilenabstand"><LineSpacingIcon /></Tool>
                <More w={12} label="Abstandsoptionen" />
                <Divider $l={10} $r={4} />
                <Tool aria-label="Schattierung"><FillIcon /></Tool>
                <More w={14} gap={4} label="Schattierungsfarbe" />
                <Tool aria-label="Rahmen"><BordersIcon /></Tool>
                <More label="Rahmenlinien" />
              </ToolRow>
            </Stack>
          </GroupBody>
          <Footer launcher>Absatz</Footer>
        </Group>

        <Group $w={586}>
          <GroupBody $pad={11}>
            <Gallery>
              {styleCards.map((s, i) => (
                <StyleCard key={i} $on={i === 0}>
                  <Sample $size={s.size} $weight={s.weight} $color={s.color}>{s.sample}</Sample>
                  <StyleName>{s.name}</StyleName>
                </StyleCard>
              ))}
              <StyleCard>
                <TitleSample $size={40} $weight={300}>AaB</TitleSample>
                <StyleName>Titel</StyleName>
              </StyleCard>
              <GalleryScroll>
                <button disabled aria-label="Nach oben"><Icon w={8} h={6}><path d="M.8 5 4 1.700 7.200 5" /></Icon></button>
                <button aria-label="Nach unten"><Chevron /></button>
                <button aria-label="Alle Formatvorlagen"><CustomizeIcon /></button>
              </GalleryScroll>
            </Gallery>
          </GroupBody>
          <Footer launcher>Formatvorlagen</Footer>
        </Group>

        <Group $w={137}>
          <GroupBody $pad={12}>
            <Stack>
              <TextButton $h={24} $icon={22} $gap={14}><span><Magnifier /></span>Suchen<Chevron /></TextButton>
              <TextButton $h={34} $icon={22}><span><ReplaceIcon /></span>Ersetzen</TextButton>
              <TextButton $h={24} $icon={22} $gap={4}><span><CursorIcon /></span>Markieren<Chevron /></TextButton>
            </Stack>
          </GroupBody>
          <Footer>Bearbeiten</Footer>
        </Group>

        <Group $w={85}>
          <GroupBody><BigButton $w={84}><MicIcon />Diktieren</BigButton></GroupBody>
          <Footer>Sprache</Footer>
        </Group>

        <Group $w={72}>
          <GroupBody><BigButton $w={71}><EditorIcon />Editor</BigButton></GroupBody>
          <Footer>Editor</Footer>
        </Group>
        <CollapseButton aria-label="Menüband ausblenden"><Icon w={12} h={7}><path d="M.5 6.500 6 1l5.500 5.500" /></Icon></CollapseButton>
      </Ribbon>

      <Workspace>
        <Page>
          <Connectors width="990" height="600" aria-hidden="true">
            <path d="M285 260 320 338M596 267 548 339" />
          </Connectors>
          <Shape $x={117} $y={186} $w={177} $h={72} $round="28px" />
          <TextBox $x={134} $y={204} $w={147} $h={44} $lead={34}>wetterbedingt</TextBox>
          <Shape $x={564} $y={186} $w={172} $h={75} $round="28px" />
          <TextBox $x={573} $y={206} $w={161} $h={35} $lead={34}>Mit Ludwig XVI</TextBox>
          <Shape $x={323} $y={295} $w={221} $h={133} $round="50%" />
          <TextBox $x={371} $y={319} $w={133} $h={74} $lead={35}>Probleme der<br />Menschen</TextBox>
        </Page>
      </Workspace>

      <StatusBar>
        <StatusButton $gap={29}>Seite 1 von 1</StatusButton>
        <StatusButton $gap={26}>7 Wörter</StatusButton>
        <StatusButton $gap={21} aria-label="Rechtschreibung">
          <Icon w={18} h={17}><path d="M9 2C7 .7 4 .7 1 .7v14h6l2 1.500V2c2-1.300 5-1.300 8-1.300V9M11 12.500l2.500 3.500L18 10.500" /></Icon>
        </StatusButton>
        <StatusButton>Deutsch (Deutschland)</StatusButton>
        <Spacer />
        <StatusButton $gap={14}>
          <Icon w={18} h={18}><path d="M4 1H1v3M14 1h3v3M1 14v3h3M17 14v3h-3M5 3.700h5L13 7v7.500H5zM10 3.700V7h3" /></Icon>
          Fokus
        </StatusButton>
        <ViewButton aria-label="Lesemodus"><Icon w={18} h={17}><path d="M9 2C7 .7 4 .7 1 .7v14h6l2 1.500 2-1.500h6V.7c-3 0-6 0-8 1.300v14M3 5h4M3 8h4M3 11h4M11 5h4M11 8h4M11 11h4" /></Icon></ViewButton>
        <ViewButton $on aria-label="Seitenlayout"><Icon w={15} h={18}><path d="M1 1h13v16H1zM3.500 4.500h8M3.500 7h8M3.500 9.500h8M3.500 12h8M3.500 14.500h8" /></Icon></ViewButton>
        <ViewButton aria-label="Weblayout"><Icon w={18} h={18}><path d="M7 15.500H1V1h15v5M1 3.800h15M3.500 6.700h6M3.500 9.500h4M3.500 12h3" /><circle cx="12.500" cy="12" r="5" fill="#f3f2f1" /><path d="M7.500 12h10M12.500 7c-3 3-3 7 0 10 3-3 3-7 0-10z" /></Icon></ViewButton>
        <StatusButton aria-label="Verkleinern"><Icon w={18} h={10} sw={1.300}><path d="M8 5h9" /></Icon></StatusButton>
        <ZoomSlider type="range" min="0" max="100" defaultValue="50" aria-label="Zoom" />
        <StatusButton aria-label="Vergrößern" $gap={16}><Icon w={10} h={10} sw={1.300}><path d="M0 5h10M5 0v10" /></Icon></StatusButton>
        <StatusButton>100 %</StatusButton>
      </StatusBar>

      <Taskbar>
        <PinnedStart>
          <TaskButton $w={60} aria-label="Start"><WindowsLogo /></TaskButton>
          <TaskButton $w={60} aria-label="Suche"><Magnifier /></TaskButton>
          <TaskButton $w={60} aria-label="Cortana"><Icon w={20} h={20} sw={2.600}><circle cx="10" cy="10" r="8.500" /></Icon></TaskButton>
          <TaskButton $w={60} aria-label="Aufgabenansicht"><TaskViewIcon /></TaskButton>
        </PinnedStart>
        <TaskButton aria-label="Dropbox"><DropboxIcon /></TaskButton>
        <TaskButton aria-label="Store"><StoreIcon /></TaskButton>
        <TaskButton aria-label="Office"><OfficeIcon /></TaskButton>
        <TaskButton aria-label="Explorer"><ExplorerIcon /></TaskButton>
        <TaskButton $state="active" aria-label="Word"><WordTile /></TaskButton>
        <TaskButton aria-label="Excel"><ExcelTile /></TaskButton>
        <TaskButton aria-label="PowerPoint"><PowerPointTile /></TaskButton>
        <TaskButton $state="open" aria-label="Chrome"><ChromeIcon /></TaskButton>
        <TaskButton aria-label="Spotify"><SpotifyIcon /></TaskButton>
        <TaskButton aria-label="Mail"><MailIcon /></TaskButton>
        <Tray>
          <Icon w={17} h={9} sw={1.500}><path d="M.7 8.500 8.500 1l7.800 7.500" /></Icon>
          <Icon w={20} h={12} sw={1.300}><path d="M.7.700h17v10.600h-17zM17.700 4h1.600v4h-1.600" /><path d="M2.500 2.500h5v7h-5z" fill="#fff" stroke="none" /></Icon>
          <Icon w={16} h={16} sw={1.300}><path d="M1 15.500C1 7 7 1 15.500 1M4.500 15.500c0-6 5-10.500 11-10.500M8 15.500C8 11.500 11.500 8.500 15.500 8.500" /><circle cx="13.800" cy="14" r="1.700" fill="#fff" stroke="none" /></Icon>
          <Icon w={20} h={16} sw={1.300}><path d="M.7 5.500h2.800L7.500 2v12l-4-3.500H.7zM10 6c1 1 1 3 0 4M12.500 3.500c2.500 2.500 2.500 6.500 0 9" /><path d="M15.500 1c4.500 4 4.500 10 0 14" opacity=".5" /></Icon>
          <span>DEU</span>
          <Clock>20:08<br />26.05.2021</Clock>
          <NoticeButton aria-label="Benachrichtigungen"><Icon w={20} h={19} sw={1.400}><path d="M.7.700h18.600v15.500H13L10 18.500 7 16.200H.7z" /></Icon></NoticeButton>
        </Tray>
      </Taskbar>
    </Shell>
  );
}
